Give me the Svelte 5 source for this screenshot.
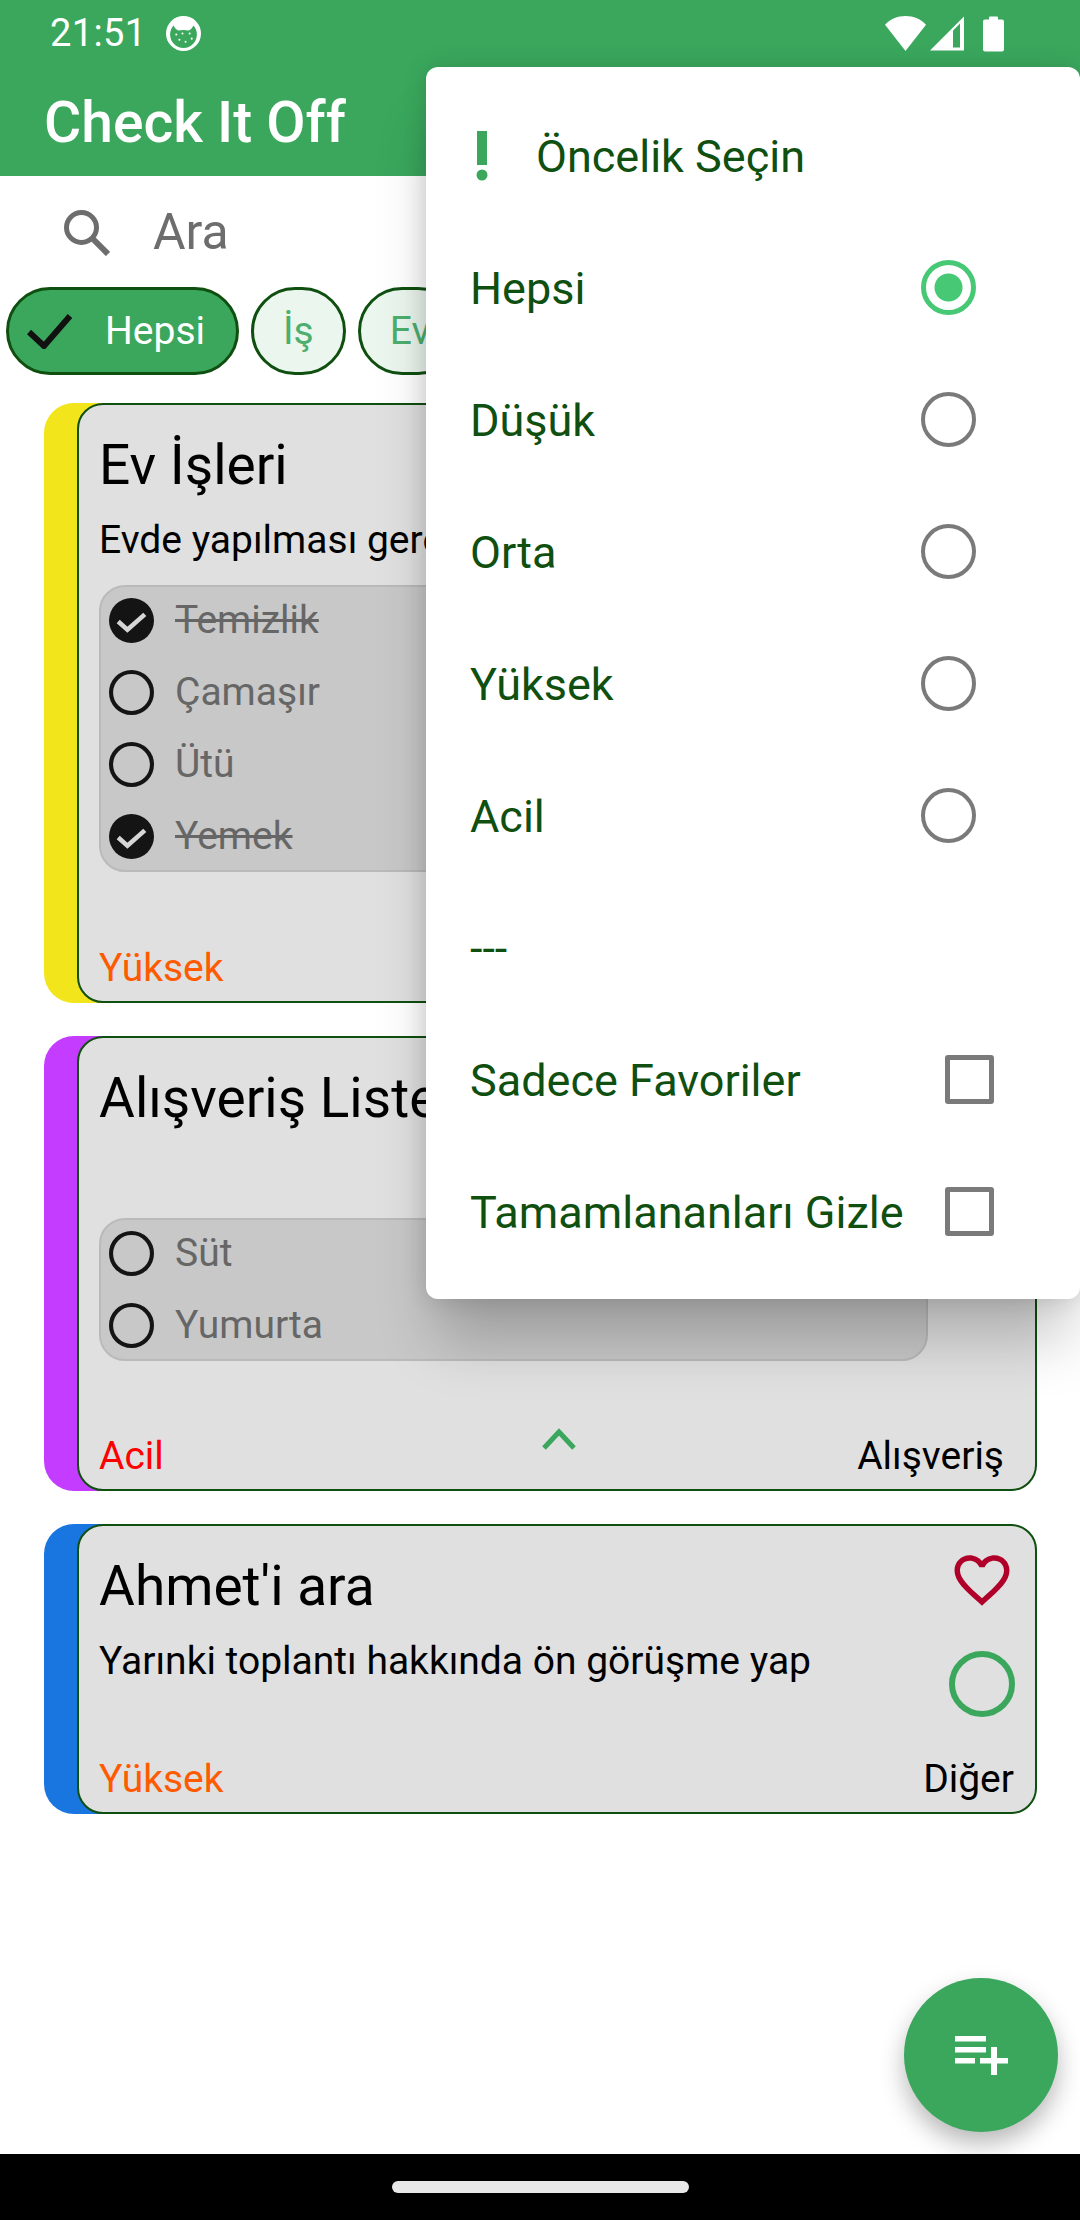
<script>
	const chips = [
		{ label: 'Hepsi', on: true },
		{ label: 'İş', on: false },
		{ label: 'Ev', on: false }
	];

	const cards = [
		{
			title: 'Ev İşleri', desc: 'Evde yapılması gereken işler', color: '#f2e51c',
			priority: 'Yüksek', prio: '#ff5a00', tag: 'Ev', tagPad: 21, height: 600,
			tasks: [
				{ t: 'Temizlik', done: true },
				{ t: 'Çamaşır', done: false },
				{ t: 'Ütü', done: false },
				{ t: 'Yemek', done: true }
			]
		},
		{
			title: 'Alışveriş Listesi', desc: '', color: '#c43cff',
			priority: 'Acil', prio: '#ff0000', tag: 'Alışveriş', tagPad: 31, height: 455,
			tasks: [
				{ t: 'Süt', done: false },
				{ t: 'Yumurta', done: false }
			]
		},
		{
			title: "Ahmet'i ara", desc: 'Yarınki toplantı hakkında ön görüşme yap', color: '#1976e0',
			priority: 'Yüksek', prio: '#ff5a00', tag: 'Diğer', tagPad: 21, height: 290,
			tasks: []
		}
	];

	const radios = [
		{ label: 'Hepsi', on: true },
		{ label: 'Düşük', on: false },
		{ label: 'Orta', on: false },
		{ label: 'Yüksek', on: false },
		{ label: 'Acil', on: false }
	];
</script>

<div class="screen">
	<header class="top">
		<div class="status">
			<span class="time">21:51</span>
			<svg class="cat" viewBox="0 0 34 34" width="35" height="35">
				<circle cx="17" cy="17" r="17" fill="#fff" />
				<circle cx="17" cy="18" r="13" fill="#3aa75d" />
				<path d="M7 9q2 4 5 5 5-1 10 0 3-1 5-5l-4-6H11z" fill="#fff" />
				<g fill="#fff"><circle cx="10" cy="18" r="1" /><circle cx="16" cy="17" r="1" /><circle cx="23" cy="17" r="1" /><circle cx="13" cy="23" r="1" /><circle cx="19" cy="25" r="1" /><circle cx="25" cy="22" r="1" /></g>
			</svg>
			<span class="grow"></span>
			<svg viewBox="0 0 40 34" width="41" height="35"><path d="M0 8.500C5 3 12 0 20 0s15 3 20 8.500L20 34z" fill="#fff" /></svg>
			<svg class="signal" viewBox="0 0 34 34" width="34" height="35"><path d="M0 34 34 0v34z" fill="#fff" /><path d="M23 14v17h7V7z" fill="#3aa75d" /></svg>
			<svg class="battery" viewBox="0 0 21 36" width="21" height="37"><path d="M6 2q0-1 1-1h7q1 0 1 1v2h4q2 0 2 2v28q0 2-2 2H2q-2 0-2-2V6q0-2 2-2h4z" fill="#fff" /></svg>
		</div>
		<div class="title">Check It Off</div>
	</header>

	<div class="search">
		<svg viewBox="0 0 48 48" width="48" height="48"><circle cx="19.500" cy="19.500" r="15" fill="none" stroke="#6d6d6d" stroke-width="5" /><path d="m30 30 16 16" stroke="#6d6d6d" stroke-width="6" /></svg>
		<span>Ara</span>
	</div>

	<div class="chips">
		{#each chips as c}
			<div class="chip" class:on={c.on}>
				{#if c.on}
					<svg viewBox="0 0 46 36" width="46" height="36"><path d="M2 19l15 14L43 3" fill="none" stroke="#111" stroke-width="6" /></svg>
				{/if}
				<span>{c.label}</span>
			</div>
		{/each}
	</div>

	<main class="cards">
		{#each cards as card}
			<article class="card" style:background={card.color} style:height="{card.height}px">
				<div class="inner">
					<div class="body">
						<div class="left">
							<h2>{card.title}</h2>
							<p>{card.desc}</p>
							{#if card.tasks.length}
								<ul>
									{#each card.tasks as task}
										<li class:done={task.done}>
											{#if task.done}
												<svg viewBox="0 0 44 44" width="45" height="45"><circle cx="22" cy="22" r="22" fill="#141414" /><path d="M9 23l9 8 17-15" fill="none" stroke="#d6d6d6" stroke-width="4.500" /></svg>
											{:else}
												<svg viewBox="0 0 44 44" width="45" height="45"><circle cx="22" cy="22" r="20" fill="none" stroke="#141414" stroke-width="4" /></svg>
											{/if}
											<span>{task.t}</span>
										</li>
									{/each}
								</ul>
							{/if}
						</div>
						<div class="side">
							<svg viewBox="0 0 24 24" width="66" height="66"><path d="M16.500 3c-1.740 0-3.410.81-4.500 2.090C10.910 3.810 9.240 3 7.500 3 4.420 3 2 5.420 2 8.500c0 3.780 3.400 6.860 8.550 11.540L12 21.350l1.450-1.320C18.600 15.360 22 12.280 22 8.500 22 5.420 19.580 3 16.500 3zm-4.400 15.550l-.1.100-.1-.1C7.140 14.240 4 11.390 4 8.500 4 6.500 5.500 5 7.500 5c1.540 0 3.040.99 3.570 2.360h1.870C13.460 5.990 14.960 5 16.500 5c2 0 3.500 1.500 3.500 3.500 0 2.890-3.140 5.740-7.900 10.050z" fill="#b0002a" /></svg>
							<svg class="ring" viewBox="0 0 66 66" width="66" height="66"><circle cx="33" cy="33" r="30" fill="none" stroke="#3aa75d" stroke-width="6" /></svg>
						</div>
					</div>
					<div class="foot">
						<span style:color={card.prio}>{card.priority}</span>
						{#if card.tasks.length}
							<svg class="chev" viewBox="0 0 34 22" width="34" height="22"><path d="M2 20 17 4l15 16" fill="none" stroke="#3aa75d" stroke-width="5" /></svg>
						{:else}
							<span></span>
						{/if}
						<span class="tag" style:padding-right="{card.tagPad}px">{card.tag}</span>
					</div>
				</div>
			</article>
		{/each}
	</main>

	<footer class="nav"><i></i></footer>

	<button class="fab" aria-label="Yeni liste">
		<svg viewBox="0 0 53 39" width="53" height="39"><path d="M0 0h31v5.500H0zM0 11h31v5.500H0zM0 22h20v5.500H0zM25 22h11V11h6v11h11v5.500H42V39h-6V27.500H25z" fill="#fff" /></svg>
	</button>

	<div class="menu">
		<div class="row head">
			<svg viewBox="0 0 12 50" width="12" height="50"><path d="M1 0h10v34H1z" fill="#3aa75d" /><circle cx="6" cy="44" r="5.500" fill="#3aa75d" /></svg>
			<span>Öncelik Seçin</span>
		</div>
		{#each radios as r}
			<div class="row">
				<span>{r.label}</span>
				<i class="radio" class:on={r.on}></i>
			</div>
		{/each}
		<div class="row"><span>---</span></div>
		<div class="row"><span>Sadece Favoriler</span><i class="box"></i></div>
		<div class="row"><span>Tamamlananları Gizle</span><i class="box"></i></div>
	</div>
</div>

<style>
	:global(body) {
		margin: 0;
		background: #fff;
	}

	.screen {
		position: relative;
		width: 1080px;
		height: 2220px;
		overflow: hidden;
		display: flex;
		flex-direction: column;
		font-family: Roboto, sans-serif;
		background: #fff;
	}

	.top {
		background: #3aa75d;
		height: 176px;
		color: #fff;
	}

	.status {
		height: 66px;
		display: flex;
		align-items: center;
		gap: 16px;
		padding: 0 76px 0 50px;
	}

	.time {
		font-size: 38px;
		letter-spacing: 0.4px;
		margin-right: 3px;
	}

	.grow {
		flex: 1;
	}

	.signal {
		margin-left: -12px;
	}

	.battery {
		margin-left: 3px;
	}

	.title {
		font-size: 57px;
		font-weight: 500;
		padding: 0 0 0 44px;
		line-height: 56px;
		margin-top: 29px;
	}

	.search {
		height: 111px;
		display: flex;
		align-items: center;
		padding-left: 62px;
		gap: 43px;
		font-size: 50px;
		color: #6d6d6d;
	}

	.chips {
		display: flex;
		gap: 12px;
		padding-left: 6px;
		height: 88px;
	}

	.chip {
		flex: none;
		box-sizing: border-box;
		height: 88px;
		display: flex;
		align-items: center;
		border: 3px solid #0f4f10;
		border-radius: 44px;
		background: #ebf6ee;
		color: #4caf6e;
		font-size: 39px;
		padding: 0 29px;
	}

	.chip.on {
		background: #3aa75d;
		color: #fff;
		padding: 0 31px 0 18px;
		gap: 32px;
	}

	.cards {
		display: flex;
		flex-direction: column;
		gap: 33px;
		padding: 28px 43px 0 44px;
		flex: 1;
	}

	.card {
		border-radius: 30px;
		padding-left: 33px;
		box-sizing: border-box;
		flex: none;
	}

	.inner {
		height: 100%;
		box-sizing: border-box;
		background: #e0e0e0;
		border: 2px solid #0f4f10;
		border-radius: 26px;
		display: flex;
		flex-direction: column;
		padding: 0 17px 0 20px;
	}

	.body {
		flex: 1;
		display: flex;
		min-height: 0;
	}

	.left {
		flex: 1;
		min-width: 0;
	}

	h2 {
		margin: 28px 0 0;
		font-size: 55px;
		font-weight: 400;
		line-height: 64px;
		color: #000;
		white-space: nowrap;
	}

	p {
		margin: 19px 0 0;
		height: 48px;
		font-size: 39px;
		line-height: 48px;
		color: #000;
		white-space: nowrap;
	}

	ul {
		list-style: none;
		margin: 21px 0 0;
		padding: 0 0 0 8px;
		background: #c8c8c8;
		border: 2px solid #bababa;
		border-radius: 26px;
	}

	li {
		height: 72px;
		display: flex;
		align-items: center;
		gap: 21px;
		font-size: 39px;
		color: #666;
	}

	li:first-child {
		margin-top: -3px;
	}

	li:last-child {
		margin-bottom: -2px;
	}

	li.done span {
		text-decoration: line-through;
	}

	.side {
		flex: none;
		width: 72px;
		display: flex;
		flex-direction: column;
		align-items: center;
		padding-top: 21px;
		gap: 38px;
		margin-left: 18px;
	}

	.foot {
		display: grid;
		grid-template-columns: 1fr auto 1fr;
		align-items: end;
		font-size: 39px;
		line-height: 48px;
		padding-bottom: 9px;
		color: #000;
	}

	.chev {
		margin-bottom: 30px;
	}

	.tag {
		text-align: right;
		margin-right: -17px;
	}

	.nav {
		height: 66px;
		background: #000;
		display: flex;
		align-items: center;
		justify-content: center;
	}

	.nav i {
		width: 297px;
		height: 12px;
		border-radius: 6px;
		background: #e8e8e8;
	}

	.fab {
		position: absolute;
		left: 904px;
		top: 1978px;
		width: 154px;
		height: 154px;
		border: none;
		padding: 0;
		border-radius: 50%;
		background: #3aa75d;
		box-shadow: 0 12px 24px rgba(0, 0, 0, 0.28);
		display: flex;
		align-items: center;
		justify-content: center;
	}

	.menu {
		position: absolute;
		left: 426px;
		top: 67px;
		width: 654px;
		height: 1232px;
		box-sizing: border-box;
		padding: 23px 0 0 44px;
		background: #fff;
		border-radius: 12px;
		box-shadow: 0 50px 60px -10px rgba(0, 0, 0, 0.22), 0 0 24px rgba(0, 0, 0, 0.14);
		color: #0f4f10;
		font-size: 45px;
	}

	.row {
		height: 132px;
		display: flex;
		align-items: center;
		position: relative;
	}

	.row.head {
		gap: 48px;
		padding-left: 6px;
	}

	.radio {
		position: absolute;
		left: 451px;
		width: 55px;
		height: 55px;
		margin-top: -2px;
		box-sizing: border-box;
		border: 4px solid #7a7a7a;
		border-radius: 50%;
	}

	.radio.on {
		border: 5px solid #47c875;
		background: radial-gradient(circle, #47c875 13.500px, transparent 14.500px);
	}

	.box {
		position: absolute;
		left: 475px;
		width: 49px;
		height: 49px;
		margin-top: -2px;
		box-sizing: border-box;
		border: 5px solid #7a7a7a;
		border-radius: 3px;
	}
</style>
